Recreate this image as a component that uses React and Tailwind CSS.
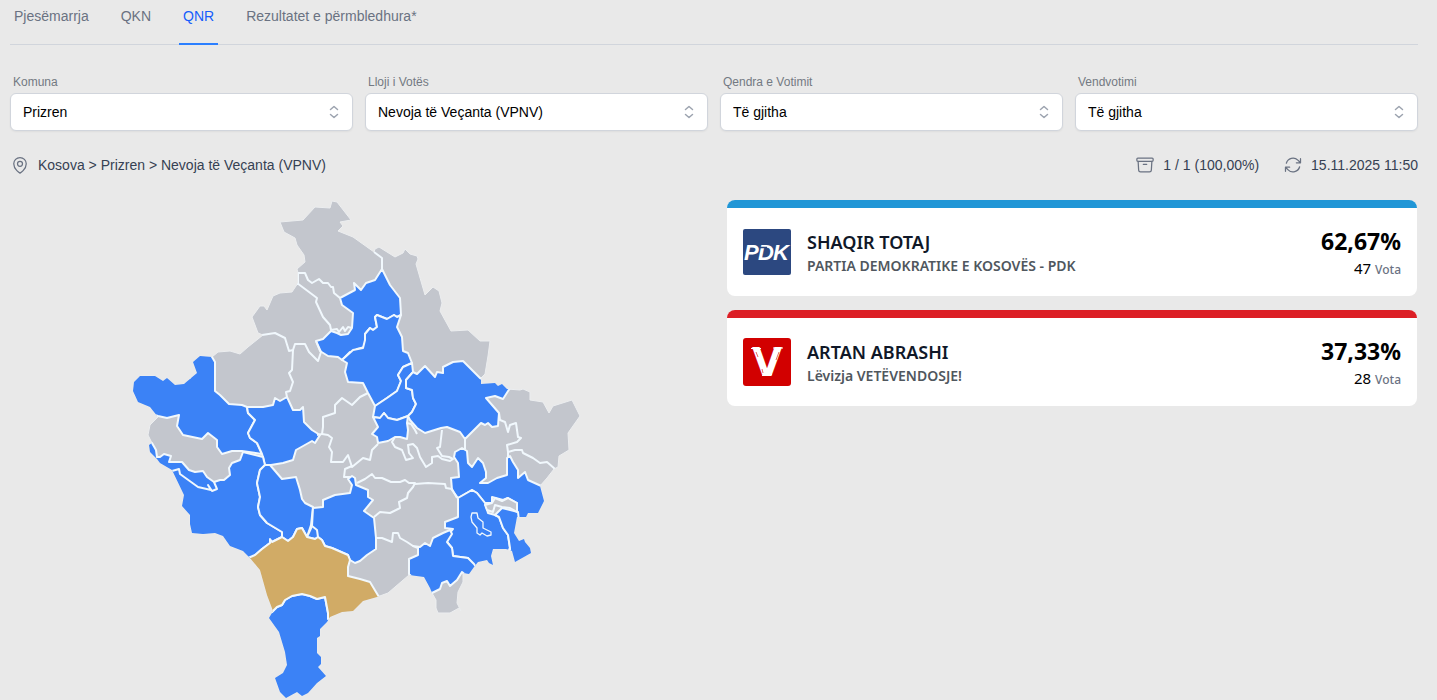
import React, { useState } from 'react';
import { HiOutlineMapPin, HiOutlineArchiveBox, HiOutlineArrowPath } from 'react-icons/hi2';

const tabs = ['Pjesëmarrja', 'QKN', 'QNR', 'Rezultatet e përmbledhura*'];

const filters = [
  { id: 'komuna', label: 'Komuna', options: ['Prizren'] },
  { id: 'lloji', label: 'Lloji i Votës', options: ['Nevoja të Veçanta (VPNV)'] },
  { id: 'qendra', label: 'Qendra e Votimit', options: ['Të gjitha'] },
  { id: 'vendvotimi', label: 'Vendvotimi', options: ['Të gjitha'] },
];

const PdkLogo = () => (
  <svg viewBox="0 0 48 46" className="w-12 shrink-0" role="img" aria-label="PDK">
    <rect width="48" height="46" rx="2" fill="#2c4880" />
    <g fill="#fff" fontFamily="Liberation Sans, sans-serif" fontWeight="700" fontStyle="italic" fontSize="22">
      <text x="1" y="31">P</text>
      <text x="15" y="31">D</text>
      <text x="30" y="31">K</text>
    </g>
    <path d="M17 18.500 L24 18.500" stroke="#2c4880" strokeWidth="1.5" />
  </svg>
);

const LvvLogo = () => (
  <svg viewBox="0 0 48 48" className="w-12 shrink-0" role="img" aria-label="LVV">
    <rect width="48" height="48" rx="3" fill="#d20000" />
    <text x="24" y="38" fontSize="39" fontWeight="700" textAnchor="middle" fill="#fff" fontFamily="DejaVu Sans, sans-serif">V</text>
    <path d="M8 10.500h10M30 10h10M19 37.500l10-1" stroke="#fff" strokeWidth="1" />
    <path d="M13 14l2 5M36 14l-3 8M19 31l1 4" stroke="#d20000" strokeWidth=".6" />
  </svg>
);

const candidates = [
  { name: 'SHAQIR TOTAJ', party: 'PARTIA DEMOKRATIKE E KOSOVËS - PDK', percent: '62,67%', votes: 47, bar: 'bg-[#2196d6]', Logo: PdkLogo },
  { name: 'ARTAN ABRASHI', party: 'Lëvizja VETËVENDOSJE!', percent: '37,33%', votes: 28, bar: 'bg-[#dc1f26]', Logo: LvvLogo },
];

const outline =
  '280,222 303,220 315,207 330,208 332,201 337,202 351,220 340,222 343,226 338,231 353,237 374,252 375,249 379,247 395,257 403,253 405,249 410,254 417,256 418,259 416,264 425,295 433,287 439,291 442,303 440,311 451,331 468,330 480,341 490,341 488,356 485,374 481,378 481,384 495,383 498,386 502,384 507,389 520,390 523,389 530,392 530,400 543,402 549,413 553,406 572,400 580,416 568,433 569,450 559,456 558,467 554,469 547,478 540,486 544,501 538,513 528,513 526,517 517,517 514,533 519,541 524,539 525,542 530,548 531,553 515,562 512,551 506,549 493,549 491,556 493,565 489,563 487,560 478,562 474,567 469,574 463,573 463,582 458,592 457,603 461,611 459,608 450,613 438,613 436,608 436,600 432,593 430,588 424,577 409,575 395,587 388,593 377,597 363,601 353,611 342,612 330,617 327,622 320,629 320,636 317,638 317,653 321,657 321,664 318,667 326,676 317,683 308,693 302,696 297,692 286,698 280,692 275,678 283,673 287,665 285,652 279,632 269,618 273,611 267,595 260,570 250,558 243,551 230,546 223,536 215,533 203,534 192,533 190,524 190,515 182,506 184,495 172,470 160,463 157,459 150,452 149,445 152,443 148,435 150,425 158,417 150,407 138,402 133,391 134,382 140,376 155,376 163,381 167,378 175,385 184,384 197,373 193,362 200,356 212,357 218,352 230,351 240,354 248,347 263,335 258,333 252,317 260,306 264,306 267,310 273,296 280,293 292,292 298,283 298,273 297,269 305,262 304,255 297,245 295,238 284,232';

// Municipalities with reported results. Edges on the country border run past
// the outline and are cut by the clip path.
const reported = [
  '382,269 390,285 400,298 401,315 397,317 394,315 387,319 377,315 375,317 377,327 373,330 370,328 365,334 365,347 357,349 353,352 350,352 342,360 338,357 328,356 320,351 316,341 323,339 331,331 337,333 341,335 348,334 352,328 353,313 342,305 340,298 355,290 354,283 361,290 366,283 375,280',
  '342,360 353,350 363,348 365,340 365,334 370,328 373,330 377,327 375,317 377,315 387,319 394,315 397,317 401,315 397,327 402,337 403,351 408,353 412,363 403,367 398,375 401,381 397,391 387,398 375,406 368,393 363,383 348,382 345,372 347,363',
  '412,363 403,367 398,375 401,381 397,391 387,398 375,406 373,417 380,418 384,413 388,418 397,420 408,416 412,412 416,404 413,398 412,390 406,388 406,380 413,372',
  '413,372 417,374 425,366 435,377 437,372 443,373 443,367 453,362 463,361 480,378 484,380 495,380 502,381 510,388 503,399 495,396 486,398 499,413 498,426 492,427 488,423 485,425 481,423 465,439 460,432 447,427 441,428 425,433 417,428 410,420 408,416 412,412 416,404 413,398 412,390 406,388 406,380',
  '373,417 380,418 384,413 388,418 397,420 408,416 407,423 408,430 407,439 400,437 395,437 388,441 378,443 377,437 372,434 378,427',
  '212,357 215,362 215,391 220,395 229,404 242,405 247,407 248,413 255,420 248,433 250,438 257,443 262,454 242,451 232,451 222,454 217,447 217,440 208,433 202,439 183,435 177,426 179,415 167,418 158,416 145,412 125,402 125,370 165,368 190,378 185,350 205,348',
  '247,407 258,407 263,407 273,405 275,398 280,401 287,397 293,410 300,410 303,407 304,422 312,430 320,435 315,443 312,441 296,450 293,460 283,463 265,466 263,457 262,454 257,443 250,438 248,433 255,420 248,413',
  '145,443 152,443 156,450 157,457 160,457 164,454 171,456 169,462 182,462 189,470 195,472 203,471 207,477 214,482 220,480 224,480 230,475 229,468 232,463 240,460 243,452 263,457 265,465 260,470 257,483 260,497 258,507 260,515 267,523 282,532 282,537 270,543 262,549 250,560 235,556 180,540 165,475 140,455',
  '265,465 260,470 257,483 260,497 258,507 260,515 267,523 282,532 282,537 288,541 293,537 297,529 302,528 307,537 311,525 313,507 305,503 302,499 300,490 296,477 282,479 270,465',
  '313,508 323,507 323,500 335,495 350,493 352,485 348,479 352,476 355,478 356,485 368,490 368,497 373,500 364,511 374,518 376,538 376,549 367,555 360,561 355,563 350,560 348,555 332,548 325,546 322,540 318,537 315,539 307,537 312,526',
  '272,612 277,607 282,605 285,600 292,596 302,594 310,596 317,599 325,597 328,613 329,619 340,680 300,705 270,700 260,618',
  '462,448 467,451 468,463 472,467 478,458 483,463 486,472 486,478 480,483 488,483 497,478 507,475 507,458 510,456 513,462 518,470 518,478 525,472 528,480 539,485 550,490 550,510 540,520 517,520 517,503 508,498 503,500 492,497 492,503 485,503 477,493 472,490 458,498 452,490 451,478 459,477 458,463 454,457 455,452',
  '472,490 458,498 458,517 445,522 445,528 453,529 450,533 447,542 452,548 453,556 468,558 474,566 495,570 505,556 510,548 508,535 503,528 499,517 495,515 488,513 485,503 477,493',
  '495,515 499,517 503,528 508,535 510,548 511,568 540,560 530,535 520,530 518,512 502,508',
  '409,574 409,559 418,555 418,548 413,546 420,547 425,543 430,546 433,538 443,533 450,530 452,534 447,542 452,548 453,556 468,558 474,564 478,570 468,577 462,572 457,580 450,586 447,581 442,583 440,589 432,593 424,590 415,580',
];

const selected =
  '255,555 262,549 270,543 270,539 272,542 282,537 288,541 293,537 297,529 302,528 307,537 315,539 318,537 322,540 325,546 332,548 348,555 350,560 348,567 348,576 360,579 370,582 379,597 365,610 340,622 328,619 328,613 325,597 317,599 310,596 302,594 292,596 285,600 282,605 277,607 272,612 264,612 248,558';

const noData = ['485,505 492,503 495,498 502,501 508,498 517,503 517,512 510,508 502,507 495,505 493,512 487,510'];

const borders = [
  '298,285 298,273 305,273 308,280 312,283 319,279 323,283 328,283 331,287 333,287 334,293 340,298',
  '374,252 382,258 382,269',
  '297,283 317,298 316,302 323,317 330,325 331,330 337,329 339,332 343,327 345,331 348,327 352,328',
  '262,335 275,333 285,338 289,351 293,350 295,344 305,344 309,352 318,361 321,352 316,341',
  '293,350 292,370 289,373 293,382 290,391 286,392 287,397',
  '368,393 360,397 352,405 342,398 335,405 335,413 323,417 323,427 322,434 317,435',
  '322,434 328,435 332,438 329,447 332,452 331,462 343,462 348,455 352,467 363,458 370,460 372,450 378,444',
  '352,466 345,469 344,477 351,477',
  '357,483 365,479 372,474 375,478 382,478 391,482 400,482 405,480 409,483 415,483 413,487 408,493 407,498 399,502 400,508 390,513 380,512 374,517',
  '415,484 428,483 445,484 446,488 452,489 457,498',
  '395,437 392,442 395,447 402,450 406,460 413,458 409,453 408,445 413,444 417,448 420,457 426,467 432,463 432,457 438,456 442,459 450,461 453,459 449,457 442,456 437,448 440,447 442,430',
  '407,423 411,424 415,430 417,434',
  '465,439 465,449',
  '499,413 500,420 505,422 508,432 510,425 516,423 518,437 521,438 517,442 507,445 508,452 508,457',
  '508,452 515,450 522,450 523,453 533,458 540,463 547,462 555,469',
  '376,538 382,538 392,542 393,533 398,533 400,538 407,542 413,546',
  '172,471 179,469 180,474 198,487 211,490 208,485 212,491 217,489 214,482',
  '312,526 317,530 318,537',
];

const enclave = '472,513 477,513 478,518 483,522 483,528 491,532 491,535 487,536 482,533 480,535 477,533 477,528 472,522 471,517';

const KosovoMap = () => (
  <svg viewBox="10 200 691 500" className="w-full block" role="img" aria-label="Kosova">
    <defs>
      <clipPath id="country">
        <polygon points={outline} />
      </clipPath>
    </defs>
    <polygon points={outline} fill="#c3c6cd" stroke="#eceef0" strokeWidth="1" strokeLinejoin="round" />
    <g clipPath="url(#country)" stroke="#f1f8fd" strokeWidth="2" strokeLinejoin="round">
      {reported.map((points) => (
        <polygon key={points} points={points} fill="#3b82f6" />
      ))}
      {noData.map((points) => (
        <polygon key={points} points={points} fill="#c3c6cd" />
      ))}
      <polygon points={selected} fill="#d1ab66" />
      {borders.map((points) => (
        <polyline key={points} points={points} fill="none" />
      ))}
      <polygon points={enclave} fill="none" strokeWidth="1.3" />
    </g>
  </svg>
);

const FilterSelect = ({ id, label, options }) => (
  <div>
    <label htmlFor={id} className="block pl-[3px] text-[12px] leading-[22px] text-[#737982]">
      {label}
    </label>
    <div className="relative">
      <select
        id={id}
        className="w-full h-[38px] appearance-none rounded-md border border-gray-300 bg-white pl-3 pr-10 text-[14px] text-black shadow-xs"
      >
        {options.map((option) => (
          <option key={option}>{option}</option>
        ))}
      </select>
      <svg viewBox="0 0 20 20" className="pointer-events-none absolute right-[9px] top-[9px] w-5 h-5" fill="none" stroke="#9ca3af" strokeWidth="1.5" strokeLinecap="round" strokeLinejoin="round">
        <path d="M6.500 7.500 10 4.500l3.500 3M6.500 12.500 10 15.500l3.500-3" />
      </svg>
    </div>
  </div>
);

const CandidateCard = ({ name, party, percent, votes, bar, Logo }) => (
  <div className="overflow-hidden rounded-lg bg-white font-['Noto_Sans',sans-serif]">
    <div className={`h-2 ${bar}`}></div>
    <div className="flex h-[88px] items-center gap-4 px-4">
      <Logo />
      <div className="flex-1 pt-1">
        <div className="text-[18px] leading-6 font-semibold text-gray-900">{name}</div>
        <div className="text-[14px] leading-6 font-semibold text-[#50575e]">{party}</div>
      </div>
      <div className="pt-[6px] text-right">
        <div className="text-[23px] leading-7 font-bold text-black">{percent}</div>
        <div className="text-[15px] leading-[26px] text-black">
          {votes} <span className="text-[12px] font-medium text-gray-500">Vota</span>
        </div>
      </div>
    </div>
  </div>
);

const App = () => {
  const [activeTab, setActiveTab] = useState('QNR');

  return (
    <div className="min-h-screen bg-[#e9e9e9] pl-[10px] pr-[19px] font-['Liberation_Sans',sans-serif]">
      <nav className="flex gap-6 border-b border-gray-300">
        {tabs.map((tab) => (
          <button
            key={tab}
            onClick={() => setActiveTab(tab)}
            className={`-mb-px h-[45px] border-b-2 px-1 pb-[10px] text-[14px] ${
              activeTab === tab ? 'border-blue-500 text-blue-600' : 'border-transparent text-gray-500'
            }`}
          >
            {tab}
          </button>
        ))}
      </nav>

      <div className="mt-[26px] grid grid-cols-4 gap-3">
        {filters.map((filter) => (
          <FilterSelect key={filter.id} {...filter} />
        ))}
      </div>

      <div className="mt-6 flex items-center justify-between text-[14px] leading-5 text-gray-700">
        <div className="flex items-center gap-2">
          <HiOutlineMapPin className="w-5 h-5 text-gray-500" />
          <span>Kosova &gt; Prizren &gt; Nevoja të Veçanta (VPNV)</span>
        </div>
        <div className="flex items-center gap-6">
          <div className="flex items-center gap-2">
            <HiOutlineArchiveBox className="w-5 h-5 text-gray-500" />
            <span>1 / 1 (100,00%)</span>
          </div>
          <div className="flex items-center gap-2">
            <HiOutlineArrowPath className="w-5 h-5 text-gray-500" />
            <span>15.11.2025 11:50</span>
          </div>
        </div>
      </div>

      <div className="mt-[25px] grid grid-cols-2 gap-[26px]">
        <KosovoMap />
        <div className="flex flex-col gap-[14px] pr-px">
          {candidates.map((candidate) => (
            <CandidateCard key={candidate.name} {...candidate} />
          ))}
        </div>
      </div>
    </div>
  );
};

export default App;
